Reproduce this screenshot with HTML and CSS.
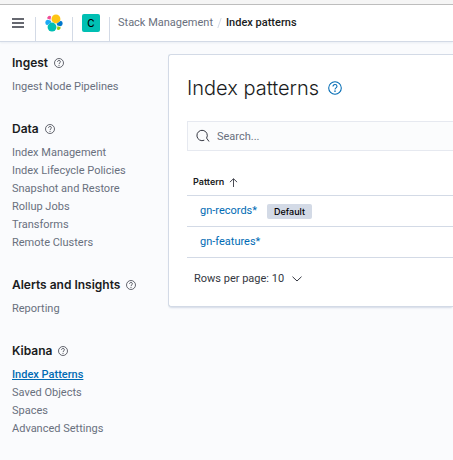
FILE: index.html
```html
<!DOCTYPE html>
<html lang="en">
<head>
<meta charset="utf-8">
<title>Index patterns</title>
<link rel="stylesheet" href="styles.css">
</head>
<body>
<svg class="defs" aria-hidden="true">
  <symbol id="help" viewBox="0 0 16 16">
    <circle cx="8" cy="8" r="7.2" fill="none" stroke="currentColor" stroke-width="1.2"/>
    <path d="M5.7 6.3c0-1.5 1-2.4 2.3-2.4s2.3.8 2.3 2.1c0 1.9-2.3 1.7-2.3 3.6" fill="none" stroke="currentColor" stroke-width="1.2"/>
    <circle cx="8" cy="11.6" r=".9" fill="currentColor"/>
  </symbol>
</svg>
<header class="header">
  <div class="cell cell-menu">
    <button class="plain" type="button" aria-label="Menu">
      <svg class="menu-icon" viewBox="0 0 12 10"><path d="M0 1h12M0 5h12M0 9h12" stroke="#343741" stroke-width="1.5"/></svg>
    </button>
  </div>
  <div class="cell">
    <a class="logo-link" href="#" aria-label="Elastic">
      <svg class="logo" viewBox="0 0 32 32">
        <circle cx="19.500" cy="8.800" r="7.900" fill="#FEC514"/>
        <circle cx="12.500" cy="23.200" r="7.900" fill="#00BFB3"/>
        <path fill="#F04E98" d="M4.300 8.600l5.500 1.500 1-5.600A3.900 3.900 0 0 0 4.300 8.600z"/>
        <path fill="#1BA9F5" d="M4 10.200a5.300 5.300 0 0 0-.2 9.900l7.600-5.600-1.500-3.100z"/>
        <path fill="#93C90E" d="M21.200 27.200a3.900 3.900 0 0 0 6.300-4.200l-5.400-1.200z"/>
        <path fill="#0077CC" d="M22 20.500l5.900 1.300a5.300 5.300 0 0 0 .2-9.900l-7.500 5.500z"/>
      </svg>
    </a>
  </div>
  <div class="cell">
    <button class="space" type="button">C</button>
  </div>
  <nav class="crumbs" aria-label="Breadcrumb">
    <a href="#">Stack Management</a><svg class="slash" viewBox="0 0 5 12"><path d="M4.2 1L.8 11" stroke="#d3dae6"/></svg><span class="current">Index patterns</span>
  </nav>
</header>
<div class="page">
  <nav class="side" aria-label="Management">
    <section>
      <h2>Ingest <svg class="help"><use href="#help"/></svg></h2>
      <ul><li><a href="#">Ingest Node Pipelines</a></li></ul>
    </section>
    <section>
      <h2>Data <svg class="help"><use href="#help"/></svg></h2>
      <ul>
        <li><a href="#">Index Management</a></li>
        <li><a href="#">Index Lifecycle Policies</a></li>
        <li><a href="#">Snapshot and Restore</a></li>
        <li><a href="#">Rollup Jobs</a></li>
        <li><a href="#">Transforms</a></li>
        <li><a href="#">Remote Clusters</a></li>
      </ul>
    </section>
    <section>
      <h2>Alerts and Insights <svg class="help"><use href="#help"/></svg></h2>
      <ul><li><a href="#">Reporting</a></li></ul>
    </section>
    <section>
      <h2>Kibana <svg class="help"><use href="#help"/></svg></h2>
      <ul>
        <li><a class="selected" href="#">Index Patterns</a></li>
        <li><a href="#">Saved Objects</a></li>
        <li><a href="#">Spaces</a></li>
        <li><a href="#">Advanced Settings</a></li>
      </ul>
    </section>
  </nav>
  <main class="panel">
    <div class="title">
      <h1>Index patterns</h1>
      <button class="plain title-help" type="button" aria-label="Help"><svg><use href="#help"/></svg></button>
    </div>
    <label class="search">
      <svg viewBox="0 0 14 14"><path d="M8.300 11.200A5.200 5.200 0 1 1 10.600 9.100L13 12.500" fill="none" stroke="#343741"/></svg>
      <input type="search" placeholder="Search..." aria-label="Search">
    </label>
    <table>
      <thead>
        <tr><th scope="col"><button class="plain sort" type="button">Pattern <svg viewBox="0 0 10 10"><path d="M5 10V1M1 4.600L5 .8l4 3.800" fill="none" stroke="#343741"/></svg></button></th></tr>
      </thead>
      <tbody>
        <tr><td><div class="row"><a href="#">gn-records*</a><span class="badge">Default</span></div></td></tr>
        <tr><td><div class="row"><a href="#">gn-features*</a></div></td></tr>
      </tbody>
    </table>
    <button class="plain pager" type="button">Rows per page: 10 <svg viewBox="0 0 10 6"><path d="M.5 .7L5 5 9.500 .7" fill="none" stroke="#343741"/></svg></button>
  </main>
</div>
</body>
</html>
```
FILE: styles.css
```css
* { box-sizing: border-box; }
body {
  margin: 0;
  background: #fafbfd;
  color: #343741;
  font: 11px/18px Roboto, "Liberation Sans", sans-serif;
}
a { color: inherit; text-decoration: none; }
svg { display: block; flex: none; }
h1, h2, ul { margin: 0; padding: 0; }
ul { list-style: none; }
.defs { position: absolute; width: 0; height: 0; }
.plain {
  display: flex;
  align-items: center;
  padding: 0;
  border: 0;
  background: none;
  color: inherit;
  font: inherit;
}
.header {
  display: flex;
  height: 42px;
  border-top: 4px solid #f5f5f5;
  border-bottom: 1px solid #d3dae6;
  background: #fff;
  box-shadow: inset 0 1px #bdbdbd, 0 1px 2px #e9edf3;
}
.cell {
  display: flex;
  justify-content: center;
  width: 37px;
  height: 24px;
  margin-top: 13px;
  border-right: 1px solid #d3dae6;
}
.cell > * { height: 18px; margin-top: -3px; }
.cell-menu { width: 36px; }
.logo { width: 18px; height: 18px; }
.menu-icon { width: 12px; height: 10px; }
.space {
  width: 18px;
  padding: 0;
  border: 0;
  border-radius: 2px;
  background: #00bfb3;
  color: #000;
  font: 500 10px/18px Inter, sans-serif;
}
.crumbs {
  display: flex;
  align-items: center;
  height: 38px;
  padding-left: 8px;
  color: #69707d;
}
.slash { width: 5px; height: 12px; margin: 0 4px; }
.current { color: #1a1c21; font-weight: 500; }
.page { display: flex; align-items: flex-start; padding-top: 12px; }
.side {
  display: flex;
  flex: none;
  flex-direction: column;
  gap: 24px;
  width: 168px;
  padding-left: 12px;
  color: #69707d;
}
.side h2 {
  display: flex;
  align-items: center;
  gap: 6px;
  margin-bottom: 6px;
  color: #1a1c21;
  font: 600 12px/18px Inter, "Liberation Sans", sans-serif;
}
.side li { height: 18px; }
.help { width: 10px; height: 10px; color: #343741; }
.side .selected { color: #006bb4; font-weight: 500; text-decoration: underline; }
.panel {
  flex: 1;
  min-width: 0;
  padding: 18px 0 18px 18px;
  border: 1px solid #d3dae6;
  border-right: 0;
  border-radius: 3px 0 0 3px;
  background: #fff;
  box-shadow: 0 2px 2px -1px #d3dae6;
}
.title { display: flex; align-items: center; gap: 9px; height: 30px; }
h1 { color: #1a1c21; font: 300 20px/30px Inter, "Liberation Sans", sans-serif; }
.title-help { color: #006bb4; }
.title-help svg { width: 14px; height: 14px; }
.search {
  display: flex;
  align-items: center;
  height: 30px;
  margin-top: 18px;
  padding-left: 8px;
  border: 1px solid #e6e9f0;
  border-right: 0;
  background: #fbfcfd;
}
.search svg { width: 14px; height: 14px; }
.search input {
  flex: 1;
  min-width: 0;
  padding: 2px 0 0 7px;
  border: 0;
  outline: 0;
  background: none;
  color: #343741;
  font: inherit;
}
.search input::placeholder { color: #69707d; opacity: 1; }
table { width: 100%; margin-top: 18px; border-spacing: 0; }
th, td { padding: 0; border-bottom: 1px solid #d3dae6; text-align: left; }
th { height: 27px; padding-left: 6px; }
.sort { gap: 5px; color: #1a1c21; font: 600 9px/18px Inter, sans-serif; }
.sort svg { width: 9px; height: 9px; }
.row {
  display: flex;
  align-items: center;
  gap: 10px;
  height: 30px;
  padding-left: 13px;
  color: #006bb4;
}
.badge {
  padding: 0 7px;
  border-radius: 2px;
  background: #d3dae6;
  color: #000;
  font: 500 9px/15px Inter, sans-serif;
}
.pager { gap: 8px; margin-top: 12px; padding-left: 7px; }
.pager svg { width: 10px; height: 6px; }
```
